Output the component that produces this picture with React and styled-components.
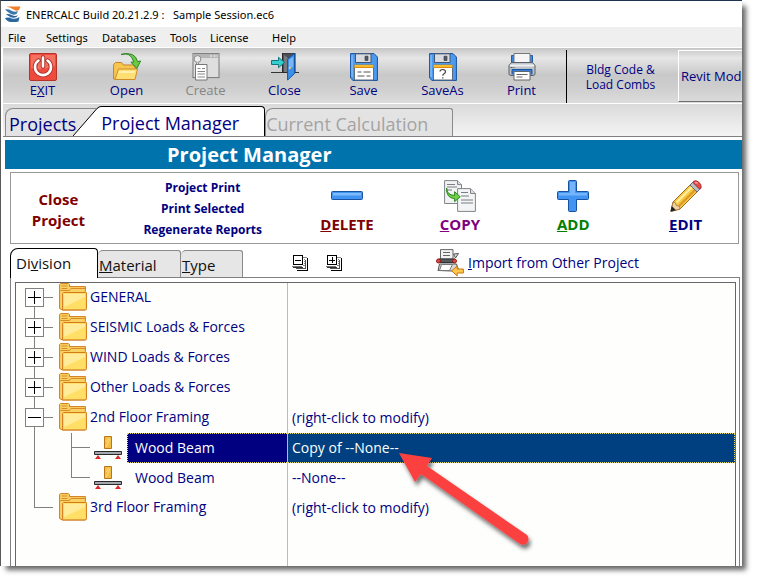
import React, { useState } from "react";
import styled, { createGlobalStyle, css } from "styled-components";

const GlobalStyle = createGlobalStyle`
  * {
    box-sizing: border-box;
  }
  body {
    margin: 0;
    background: #fff;
    font-family: "Open Sans", "Noto Sans", sans-serif;
    font-size: 13px;
    color: #000080;
  }
  button {
    margin: 0;
    padding: 0;
    border: 0;
    background: none;
    color: inherit;
    font: inherit;
    white-space: nowrap;
    cursor: pointer;
  }
  svg {
    display: block;
    flex: none;
  }
`;

/* ---------- icons ---------- */

const LogoIcon = () => (
  <svg width="16" height="16" viewBox="0 0 16 16" aria-hidden="true">
    <path d="M1.500.5h14L14 4Q11 5.500 8.500 3.500 5.500 1.500 1.500.5z" fill="#ef7f2c" />
    <path d="M0 3.500q3-1 6 1t7 .5L11.500 8Q8 9.500 5 7.500 2 5.500 0 3.500z" fill="#3b76ab" />
    <path d="M1 8q3-.5 6 1.200 3 1.500 6 0L11.500 11Q8 12.500 5.500 11 3 10 1 8z" fill="#2b6398" />
    <path d="M0 12q4-1 7 .5 4 1 7.500-1.500L13.500 15.500Q8 17 3.500 15.500 1 14.500 0 12z" fill="#2a679f" />
    <path d="M1.500 11.500q4-.5 7 1" stroke="#9cc3e4" fill="none" />
  </svg>
);

const PowerIcon = () => (
  <svg width="28" height="28" viewBox="0 0 28 28" aria-hidden="true">
    <rect x=".5" y=".5" width="27" height="27" rx="1.5" fill="#ee4b3e" stroke="#b83228" />
    <path d="M2 2h24v11Q14 18 2 15z" fill="#f4705f" />
    <path d="M9.500 7.500a8 8 0 1 0 9 0M14 4.500v9" fill="none" stroke="#a92c24" strokeWidth="4.400" strokeLinecap="round" />
    <path d="M9.500 7.500a8 8 0 1 0 9 0M14 4.500v9" fill="none" stroke="#fff" strokeWidth="2.600" strokeLinecap="round" />
  </svg>
);

const OpenIcon = () => (
  <svg width="28" height="28" viewBox="0 0 28 28" aria-hidden="true">
    <path d="M.6 26V11.500L2.500 9.500h6l2 2.500H22v14z" fill="#f6c64f" stroke="#c9832a" />
    <path d="M2 26.500 5.500 16h19L22 26.500z" fill="#ffdf72" stroke="#d08c2c" strokeLinejoin="round" />
    <path d="M6 18h16l-.6 2H5.500z" fill="#fff0ae" />
    <path d="M8 1.500Q17-2 21 9l-3 .2 5.800 6.300L27.600 8l-3 .6Q22-2 8 1.500z" fill="#6ccb45" stroke="#2c8420" strokeLinejoin="round" />
  </svg>
);

const CreateIcon = () => (
  <svg width="28" height="28" viewBox="0 0 28 28" aria-hidden="true">
    <rect x="1" y=".6" width="26" height="24" fill="#dedede" stroke="#777" />
    <path d="M1.500 1h25v4h-25z" fill="#b5b5b5" />
    <path d="M18 3h2m1.500 0h2m1 0h1" stroke="#fff" />
    <circle cx="5.500" cy="6" r="3.400" fill="#eee" stroke="#8a8a8a" />
    <path d="M4.500 9.500v4h2v-4" fill="#ddd" stroke="#8a8a8a" />
    <path d="M3.500 11.500h11.500v15.500H3.500z" fill="#fff" stroke="#777" />
    <path d="M5.500 15.500h3m-3 3h7.500m-7.500 2.500h7.500m-7.500 3h7.500M10 15.500h3" stroke="#888" />
  </svg>
);

const CloseIcon = () => (
  <svg width="28" height="28" viewBox="0 0 28 28" aria-hidden="true">
    <path d="M0 19.500h28" stroke="#333" />
    <path d="M11.500 0h12.500v19.500H11.500z" fill="#4c4f54" stroke="#26282b" />
    <path d="m13 2 4 3v14h-4z" fill="#777b80" />
    <path d="m16.600 6 7-5.500v20l-7 6.500z" fill="#3c8ee6" stroke="#1155a8" strokeLinejoin="round" />
    <path d="m17.800 7 4.500-3.600v10L17.800 17z" fill="#79b6f3" />
    <circle cx="18.800" cy="15" r="1" fill="#ffd64a" />
    <path d="M.5 7.500h7V4.300l6 5.200-6 5.200v-3.200h-7z" fill="#36cfd0" stroke="#13757c" strokeLinejoin="round" />
  </svg>
);

const FloppyIcon = ({ question }) => (
  <svg width="28" height="28" viewBox="0 0 28 28" aria-hidden="true">
    <path d="M.6.6H24l3.400 3.400v23.400H3L.6 25z" fill="#4c9af0" stroke="#14509f" strokeLinejoin="round" />
    <path d="M2 2v22" stroke="#9fcbfa" />
    <path d="M5.500.8h15.500v8.700h-15.500z" fill="#d8dbe0" stroke="#44546c" />
    <path d="M15 3.200h3v4.300h-3z" fill="#555b66" stroke="#2f343d" strokeWidth=".6" />
    <path d="M4.500 12h19v15h-19z" fill="#fff" stroke="#5c6c80" />
    <path d="M4.500 11.800h19v3h-19z" fill="#f8bd2d" />
    <path d="M4.500 14.500h19" stroke="#dc8a13" />
    {question ? (
      <path d="M11 18.600q0-2.100 2.700-2.100 2.800 0 2.800 2.200 0 1.300-1.500 2.100-1.200.7-1.200 2m0 1.500v1.200" fill="none" stroke="#444" strokeWidth="1.200" />
    ) : (
      <path d="M7.500 19h4m2 0h7m-13 4h7m2 0h4" stroke="#555" />
    )}
  </svg>
);

const PrinterIcon = () => (
  <svg width="28" height="28" viewBox="0 0 28 28" aria-hidden="true">
    <path d="M3.500 11V2.500h21V11" fill="#3b86dd" stroke="#1e5eae" />
    <path d="M6 10.500V.5h16v10z" fill="#f6f6f6" stroke="#777" />
    <path d="M1 12.500 3.500 9.500h21l2.500 3v9l-2 1H3l-2-1z" fill="#bfc3c9" stroke="#5b6068" />
    <path d="M2 12.500h24" stroke="#eff1f3" strokeWidth="2" />
    <path d="M2.500 14.500h2m1 0h1" stroke="#555" />
    <path d="M4 21.500v-5h20v5" fill="#3680da" stroke="#1453a3" />
    <path d="M6 18.500h16V27H6z" fill="#fff" stroke="#666" />
    <path d="M8.500 21.500h11m-11 2.500h6" stroke="#666" />
  </svg>
);

const MinusBarIcon = () => (
  <svg width="32" height="32" viewBox="0 0 32 32" aria-hidden="true">
    <rect x=".5" y="11.500" width="31" height="8" rx="1" fill="#4294f3" stroke="#17519f" />
    <path d="M2 13h28v2.500H2z" fill="#7ebbfb" />
  </svg>
);

const CopyIcon = () => (
  <svg width="32" height="32" viewBox="0 0 32 32" aria-hidden="true">
    <path d="M.6.6h12.900l4 4v18.900H.6z" fill="#f1f2f3" stroke="#808488" />
    <path d="M13.500.6v4h4" fill="#ddd" stroke="#808488" />
    <path d="M3 4.500h8m-8 2.500h10m-10 3h5" stroke="#7b7f83" />
    <path d="M13.600 8.600h13l4.800 4.800v18H13.600z" fill="#f3f4f5" stroke="#808488" />
    <path d="M26.500 8.600v4.900h4.900" fill="#ddd" stroke="#808488" />
    <path d="M17 12.500h7m-7 3.500h8m-8 4h12m-12 3h12" stroke="#7b7f83" />
    <path d="M2.600 8q0 7 8 7.500v-3.800l5.600 5.100-5.600 4.800v-3Q2 18 2.600 8z" fill="#6fd145" stroke="#2b861c" strokeLinejoin="round" />
  </svg>
);

const PlusBarIcon = () => (
  <svg width="32" height="32" viewBox="0 0 32 32" aria-hidden="true">
    <path d="M11.500 1.500q0-1 1-1h6q1 0 1 1v10h11q1 0 1 1v6q0 1-1 1h-11v11q0 1-1 1h-6q-1 0-1-1v-11h-10q-1 0-1-1v-6q0-1 1-1h10z" fill="#4294f3" stroke="#17519f" />
    <path d="M13 2h5v11h12v2.500H2V13h11z" fill="#74b4fa" />
  </svg>
);

const PencilIcon = () => (
  <svg width="32" height="32" viewBox="0 0 32 32" aria-hidden="true">
    <path d="m3 22 18-18 7 7-18 18-9 2.500z" fill="#f6c83f" stroke="#a56b1c" strokeLinejoin="round" />
    <path d="m6.500 22.500 17-17" stroke="#fff0a0" strokeWidth="2" />
    <path d="m9 26 17-17" stroke="#dd962b" strokeWidth="2" />
    <path d="m3 22 2 .5 1.500 3 3 .8.5 2.700-9 2.500z" fill="#f2cfa0" stroke="#97693b" strokeWidth=".7" />
    <path d="m1.700 26-1.200 5.500 5.600-1.300z" fill="#222" />
    <path d="m20 5 2.800-2.800 7 7L27 12z" fill="#b9bec5" stroke="#686d75" />
    <path d="m22.800 2.200 1-1q2-1.500 5 1t2.300 5.500l-1.300 1.500z" fill="#ea4a48" stroke="#aa2a2b" />
    <path d="m25 2.500 2.500.5" stroke="#fba7a0" strokeWidth="1.500" />
  </svg>
);

const StackIcon = ({ plus }) => (
  <svg width="16" height="16" viewBox="0 0 16 16" aria-hidden="true" shapeRendering="crispEdges">
    <path d="M5 3h10v12H5z" fill="#fff" />
    <path d="M10 2.500h5M12 4.500h1m-1 2h1m-1 2h1m-2 2h2" stroke="#888" />
    <path d="M15.500 3v13M5 15.500h10" stroke="#000" />
    <path d="M13.500 5v9M4 13.500h9" stroke="#555" />
    <path d="M0 10.500h10v1H0z" fill="#777" />
    <path d="M1 12.500h10" stroke="#333" />
    <path d="M1.500 .5h9v9h-9z" fill="#fff" stroke="#000" />
    <path d={plus ? "M3 5h6M6 2v6" : "M3 5h6"} stroke="#000" />
  </svg>
);

const ImportIcon = () => (
  <svg width="28" height="28" viewBox="0 0 28 28" aria-hidden="true">
    <path d="M4.500.6h12.500V10H4.500z" fill="#f2f2f2" stroke="#666" />
    <path d="M7 3.500h7m-7 3h7" stroke="#666" />
    <path d="m17.500 5 5-.5-3 4.500zM3.500 15h17l2.500 7h-7l-14-.5z" fill="#dadada" stroke="#555" />
    <path d="M2.500 10h16.500v3.500H2.500z" fill="#565a5e" stroke="#303336" />
    <circle cx="2.500" cy="12" r="2" fill="#e7473c" stroke="#8c1d18" />
    <circle cx="18.500" cy="12" r="2" fill="#e7473c" stroke="#8c1d18" />
    <path d="M5.500 15.500h11l-3 6H3.500z" fill="#fff" stroke="#777" />
    <path d="m15.600 21.800 5.600-4.800v3h6.200v4h-6.200v3z" fill="#ffc64b" stroke="#c97a14" strokeLinejoin="round" />
  </svg>
);

const FolderIcon = () => (
  <svg width="28" height="30" viewBox="0 0 28 30" aria-hidden="true">
    <path d="M.6 25.500V1.500L1.500.6h8l1 1v2h15.900v5l1 1v15.900q0 1.500-1.500 1.500h-22.400z" fill="#f9d262" stroke="#d27a1e" strokeLinejoin="round" />
    <path d="M2.500 3h6m-6 2.500h6M1.500 7.500h9l1.500-2h14" fill="none" stroke="#d98a2a" />
    <path d="M3.600 26.900V10.500l1-1h21.800l1 1v15.400l-1 1z" fill="#ffdf66" stroke="#d27a1e" />
    <path d="M5 11h21v3L5 24z" fill="#ffeb98" />
  </svg>
);

const BeamIcon = () => (
  <svg width="28" height="24" viewBox="0 0 28 24" aria-hidden="true">
    <path d="M10.500.5h7v12h-7z" fill="#f2be46" stroke="#bb7519" />
    <path d="m12 11 4-8M12 6l3-4" stroke="#ffdf8a" />
    <path d="M.5 15.500h27v3H.5z" fill="#a5a9ad" stroke="#26282a" />
    <path d="m1 23 3-4 3 4zM21 23l3-4 3 4z" fill="#dc2a2a" />
  </svg>
);

/* tree lines: the trunk comes from the row above and may go on below */
const ToggleLines = ({ open, first }) => (
  <svg width="43" height="30" viewBox="0 0 43 30" aria-hidden="true" fill="none" shapeRendering="crispEdges">
    <path d={first ? "M18.500 15v15M27 14.500h10" : "M18.500 0v30M27 14.500h10"} stroke="#808080" />
    <path d="M9.500 5.500h18v18h-18z" fill="#fff" stroke="#808080" />
    <path d={open ? "M12 14.500h13" : "M12 14.500h13M18.500 8v13"} stroke="#000" />
  </svg>
);

const EndLines = () => (
  <svg width="43" height="30" viewBox="0 0 43 30" aria-hidden="true" fill="none" shapeRendering="crispEdges">
    <path d="M18.500 0v14.500H37" stroke="#808080" />
  </svg>
);

const ChildLines = ({ last }) => (
  <svg width="78" height="30" viewBox="0 0 78 30" aria-hidden="true" fill="none" shapeRendering="crispEdges">
    <path d={last ? "M18.500 0v30M55.500 0v14.500H74" : "M18.500 0v30M55.500 0v30M55 14.500h19"} stroke="#808080" />
  </svg>
);

/* ---------- window ---------- */

const Screen = styled.div`
  min-height: 100vh;
  padding: 0 15px 15px 0;
  display: flex;
  overflow: hidden;
`;

const Window = styled.div`
  flex: 1;
  min-width: 0;
  display: flex;
  flex-direction: column;
  background: #fff;
  border-top: 1px solid #1d3350;
  border-left: 1px solid #5a5a5a;
  box-shadow: 5px 5px 5px -1px rgba(0, 0, 0, 0.6);
`;

const TitleBar = styled.header`
  height: 26px;
  padding-left: 4px;
  display: flex;
  align-items: center;
  gap: 5px;
  color: #000;
  font-family: "Noto Sans", sans-serif;
  font-size: 11px;
  white-space: pre;
`;

const MenuBar = styled.nav`
  height: 20px;
  padding-left: 7px;
  display: flex;
  align-items: center;
  background: #efefef;
  color: #000;
  font-family: "Noto Sans", sans-serif;
  font-size: 11px;
`;

const MenuItem = styled.button`
  width: ${(props) => props.$width}px;
  text-align: left;
`;

const Toolbar = styled.div`
  height: 57px;
  margin-left: 2px;
  display: flex;
  border-top: 1px solid #fff;
  border-bottom: 1px solid #fff;
  background: linear-gradient(#c6c6c6, #e6e6e6 18%, #c9c9c9 48%, #cdcdcd 70%, #dcdcdc);
  overflow: hidden;
`;

const ToolButton = styled.button`
  flex: none;
  width: 79px;
  padding-top: 5px;
  display: flex;
  flex-direction: column;
  align-items: center;
  font-size: 13px;
  line-height: 18px;
  &:disabled {
    color: #858585;
  }
`;

const ToolGroup = styled.div`
  display: flex;
  margin-right: 5px;
`;

const CodeButton = styled.button`
  flex: none;
  width: 112px;
  margin-top: 2px;
  padding-right: 4px;
  border-left: 1px solid #000;
  font-size: 12px;
  line-height: 15px;
`;

const RevitButton = styled.button`
  flex: 1;
  margin: 2px 0 1px;
  padding-left: 2px;
  border: solid;
  border-width: 1px 0 1px 1px;
  border-color: #fff #fff #707070;
  font-size: 13px;
  text-align: left;
`;

const MainTabs = styled.div`
  height: 33px;
  margin-left: 2px;
  padding-left: 2px;
  display: flex;
  align-items: flex-end;
  background: linear-gradient(#dadada, #f4f4f4);
  border-bottom: 1px solid #808080;
`;

const MainTab = styled.button`
  height: 28px;
  padding: 3px 24px 0 3px;
  border: 1px solid #8a8a8a;
  border-bottom: 0;
  border-radius: 8px 3px 0 0;
  background: #e3e3e3;
  font-size: 18px;
  line-height: 24px;
  &:disabled {
    padding-left: 0;
    color: #a4a4a4;
    cursor: default;
  }
  ${(props) =>
    props.$slanted &&
    css`
      height: 30px;
      margin-left: -28px;
      padding: 0;
      display: flex;
      border: 0;
      background: none;
      border-radius: 0;
    `}
`;

const TabFace = styled.span`
  height: 30px;
  padding: 4px 25px 0 0;
  border: solid #000;
  border-width: 1px 1px 0 0;
  border-radius: 0 4px 0 0;
  background: #fff;
`;

const Slant = () => (
  <svg width="28" height="30" viewBox="0 0 28 30" aria-hidden="true">
    <path d="M0 30 24 2.500Q26 .5 28 .5V30z" fill="#fff" />
    <path d="M0 30 24 2.500Q26 .5 28 .5" fill="none" stroke="#000" />
  </svg>
);

/* ---------- project manager page ---------- */

const Page = styled.main`
  flex: 1;
  display: flex;
  flex-direction: column;
  padding: 3px 0 0 4px;
`;

const Heading = styled.h1`
  margin: 0;
  padding-left: 162px;
  background: #0073ad;
  color: #fff;
  font-size: 20px;
  line-height: 29px;
`;

const Actions = styled.section`
  height: 72px;
  margin: 3px 3px 0 5px;
  display: grid;
  grid-template-columns: 95fr 182fr 113fr 113fr 114fr 111fr;
  border: 1px solid #999;
  font-weight: 700;
`;

const CloseProject = styled.button`
  padding-top: 3px;
  color: #800000;
  font-size: 15px;
  line-height: 21px;
`;

const PrintLinks = styled.div`
  padding: 4px 0 0 12px;
  display: flex;
  flex-direction: column;
  align-items: center;
  font-size: 12px;
  line-height: 21px;
`;

const ActionButton = styled.button`
  padding: 7px 0 0 6px;
  display: flex;
  flex-direction: column;
  align-items: center;
  gap: 1px;
  color: ${(props) => props.$color};
  font-size: 15px;
  line-height: 22px;
`;

const SubBar = styled.div`
  height: 33px;
  margin-left: 5px;
  padding-top: 4px;
  display: flex;
  align-items: flex-end;
`;

const SubTab = styled.button`
  width: ${(props) => props.$width}px;
  height: 27px;
  padding: 2px 0 0 1px;
  border: 1px solid #8a8a8a;
  border-bottom: 0;
  border-left-width: 0;
  border-radius: 5px 3px 0 0;
  background: #e6e6e6;
  color: #111;
  font-size: 15px;
  line-height: 22px;
  text-align: left;
  ${(props) =>
    props.$active &&
    css`
      position: relative;
      height: 30px;
      margin-bottom: -1px;
      padding: 0 0 2px 5px;
      border-color: #000;
      border-left-width: 1px;
      border-radius: 8px 4px 0 0;
      background: #fff;
    `}
`;

const TreeTools = styled.div`
  height: 29px;
  margin-left: 49px;
  display: flex;
  align-items: center;
  gap: 18px;
`;

const ImportButton = styled.button`
  height: 29px;
  margin-left: 94px;
  display: flex;
  align-items: center;
  gap: 4px;
  font-size: 14px;
`;

const Panel = styled.section`
  flex: 1;
  display: flex;
  margin: 0 2px 0 5px;
  padding: 4px 3px 0 4px;
  border: 1px solid #808080;
  border-bottom: 0;
`;

const TreeBox = styled.div`
  flex: 1;
  min-width: 0;
  border: 1px solid #666;
  border-bottom: 0;
  background: linear-gradient(#bbb, #bbb) 271px 0 / 1px 100% no-repeat #fefefd;
`;

const Tree = styled.table`
  width: 100%;
  table-layout: fixed;
  border-collapse: collapse;
  font-size: 14px;
  td {
    height: 30px;
    padding: 0;
    white-space: nowrap;
  }
`;

const NameCell = styled.td`
  width: 271px;
`;

const NameRow = styled.div`
  height: 30px;
  display: flex;
  align-items: center;
`;

const FolderName = styled.span`
  padding: 0 0 3px 3px;
`;

const BeamName = styled.span`
  flex: 1;
  margin-left: 5px;
  padding: 0 0 1px 7px;
  border: 1px dotted transparent;
  line-height: 27px;
  ${(props) =>
    props.$selected &&
    css`
      background: #000080;
      border-color: #e8dc66;
      border-right: 0;
      color: #fff;
    `}
`;

const NoteCell = styled.td`
  position: relative;
`;

const Note = styled.div`
  height: 30px;
  margin-left: 1px;
  padding: 0 4px;
  border: 1px dotted transparent;
  border-left: 0;
  line-height: 27px;
  ${(props) =>
    props.$selected &&
    css`
      background: #004080;
      border-color: #e8dc66;
      color: #fff;
    `}
`;

const Pointer = styled.svg`
  position: absolute;
  left: 112px;
  top: 19px;
  pointer-events: none;
`;

const menuItems = [
  { title: "File", width: 38 },
  { title: "Settings", width: 56 },
  { title: "Databases", width: 68 },
  { title: "Tools", width: 40 },
  { title: "License", width: 62 },
  { title: "Help", width: 40 },
];

const tools = [
  { title: "Open", icon: <OpenIcon /> },
  { title: "Create", icon: <CreateIcon />, disabled: true },
  { title: "Close", icon: <CloseIcon /> },
  { title: "Save", icon: <FloppyIcon /> },
  { title: "SaveAs", icon: <FloppyIcon question /> },
  { title: "Print", icon: <PrinterIcon /> },
];

const actions = [
  { title: "DELETE", color: "#800000", icon: <MinusBarIcon /> },
  { title: "COPY", color: "#800080", icon: <CopyIcon /> },
  { title: "ADD", color: "#008000", icon: <PlusBarIcon /> },
  { title: "EDIT", color: "#000080", icon: <PencilIcon /> },
];

const divisions = [
  { name: "GENERAL" },
  { name: "SEISMIC Loads & Forces" },
  { name: "WIND Loads & Forces" },
  { name: "Other Loads & Forces" },
  {
    name: "2nd Floor Framing",
    note: "(right-click to modify)",
    items: [
      { name: "Wood Beam", note: "Copy of --None--" },
      { name: "Wood Beam", note: "--None--" },
    ],
  },
  { name: "3rd Floor Framing", note: "(right-click to modify)", leaf: true },
];

const AccessKey = ({ text, at = 0 }) => (
  <span>
    {text.slice(0, at)}
    <u>{text[at]}</u>
    {text.slice(at + 1)}
  </span>
);

const RedArrow = () => (
  <Pointer width="136" height="102" viewBox="0 0 136 102" aria-hidden="true">
    <defs>
      <filter id="arrow-shadow" x="-10%" y="-10%" width="130%" height="130%">
        <feDropShadow dx="2" dy="4" stdDeviation="2" floodOpacity="0.55" />
      </filter>
    </defs>
    <g filter="url(#arrow-shadow)" fill="#fb4040">
      <path d="M0 1 33 6 28 14 128 83Q131 87 128 91 125 94 121 92L22 22 16 30z" />
    </g>
  </Pointer>
);

const DivisionRows = ({ division, first, open, onToggle, selected, onSelect }) => {
  const items = division.items || [];
  return (
    <>
      <tr>
        <NameCell>
          <NameRow>
            {division.leaf ? (
              <EndLines />
            ) : (
              <button
                type="button"
                aria-label={`Toggle ${division.name}`}
                aria-expanded={open}
                onClick={onToggle}
              >
                <ToggleLines open={open} first={first} />
              </button>
            )}
            <FolderIcon />
            <FolderName>{division.name}</FolderName>
          </NameRow>
        </NameCell>
        <NoteCell>
          <Note>{division.note}</Note>
        </NoteCell>
      </tr>
      {open &&
        items.map((item, index) => (
          <tr key={index} onClick={() => onSelect(index)}>
            <NameCell>
              <NameRow>
                <ChildLines last={index === items.length - 1} />
                <BeamIcon />
                <BeamName $selected={selected === index}>{item.name}</BeamName>
              </NameRow>
            </NameCell>
            <NoteCell>
              <Note $selected={selected === index}>{item.note}</Note>
              {index === 0 && <RedArrow />}
            </NoteCell>
          </tr>
        ))}
    </>
  );
};

const App = () => {
  const [opened, setOpened] = useState(["2nd Floor Framing"]);
  const [selected, setSelected] = useState(0);

  const toggle = (name) =>
    setOpened(
      opened.includes(name)
        ? opened.filter((item) => item !== name)
        : [...opened, name]
    );

  return (
    <Screen>
      <GlobalStyle />
      <Window>
        <TitleBar>
          <LogoIcon />
          <span>{"ENERCALC Build 20.21.2.9 :   Sample Session.ec6"}</span>
        </TitleBar>
        <MenuBar>
          {menuItems.map((item) => (
            <MenuItem type="button" $width={item.width} key={item.title}>
              {item.title}
            </MenuItem>
          ))}
        </MenuBar>
        <Toolbar>
          <ToolGroup>
            <ToolButton type="button">
              <PowerIcon />
              <AccessKey text="EXIT" at={1} />
            </ToolButton>
          </ToolGroup>
          <ToolGroup>
            {tools.map((tool) => (
              <ToolButton type="button" disabled={tool.disabled} key={tool.title}>
                {tool.icon}
                <span>{tool.title}</span>
              </ToolButton>
            ))}
          </ToolGroup>
          <CodeButton type="button">
            Bldg Code &amp;
            <br />
            Load Combs
          </CodeButton>
          <RevitButton type="button">Revit Mod</RevitButton>
        </Toolbar>
        <MainTabs role="tablist">
          <MainTab type="button" role="tab">
            Projects
          </MainTab>
          <MainTab type="button" role="tab" aria-selected="true" $slanted>
            <Slant />
            <TabFace>Project Manager</TabFace>
          </MainTab>
          <MainTab type="button" role="tab" disabled>
            Current Calculation
          </MainTab>
        </MainTabs>
        <Page>
          <Heading>Project Manager</Heading>
          <Actions>
            <CloseProject type="button">
              Close
              <br />
              Project
            </CloseProject>
            <PrintLinks>
              <button type="button">Project Print</button>
              <button type="button">Print Selected</button>
              <button type="button">Regenerate Reports</button>
            </PrintLinks>
            {actions.map((action) => (
              <ActionButton type="button" $color={action.color} key={action.title}>
                {action.icon}
                <AccessKey text={action.title} />
              </ActionButton>
            ))}
          </Actions>
          <SubBar>
            <SubTab type="button" $width={88} $active>
              <AccessKey text="Division" at={2} />
            </SubTab>
            <SubTab type="button" $width={83}>
              <AccessKey text="Material" />
            </SubTab>
            <SubTab type="button" $width={62}>
              <AccessKey text="Type" />
            </SubTab>
            <TreeTools>
              <button type="button" aria-label="Collapse all">
                <StackIcon />
              </button>
              <button type="button" aria-label="Expand all">
                <StackIcon plus />
              </button>
            </TreeTools>
            <ImportButton type="button">
              <ImportIcon />
              <AccessKey text="Import from Other Project" />
            </ImportButton>
          </SubBar>
          <Panel>
            <TreeBox>
              <Tree>
                <tbody>
                  {divisions.map((division, index) => (
                    <DivisionRows
                      key={division.name}
                      division={division}
                      first={index === 0}
                      open={opened.includes(division.name)}
                      onToggle={() => toggle(division.name)}
                      selected={selected}
                      onSelect={setSelected}
                    />
                  ))}
                </tbody>
              </Tree>
            </TreeBox>
          </Panel>
        </Page>
      </Window>
    </Screen>
  );
};

export default App;
